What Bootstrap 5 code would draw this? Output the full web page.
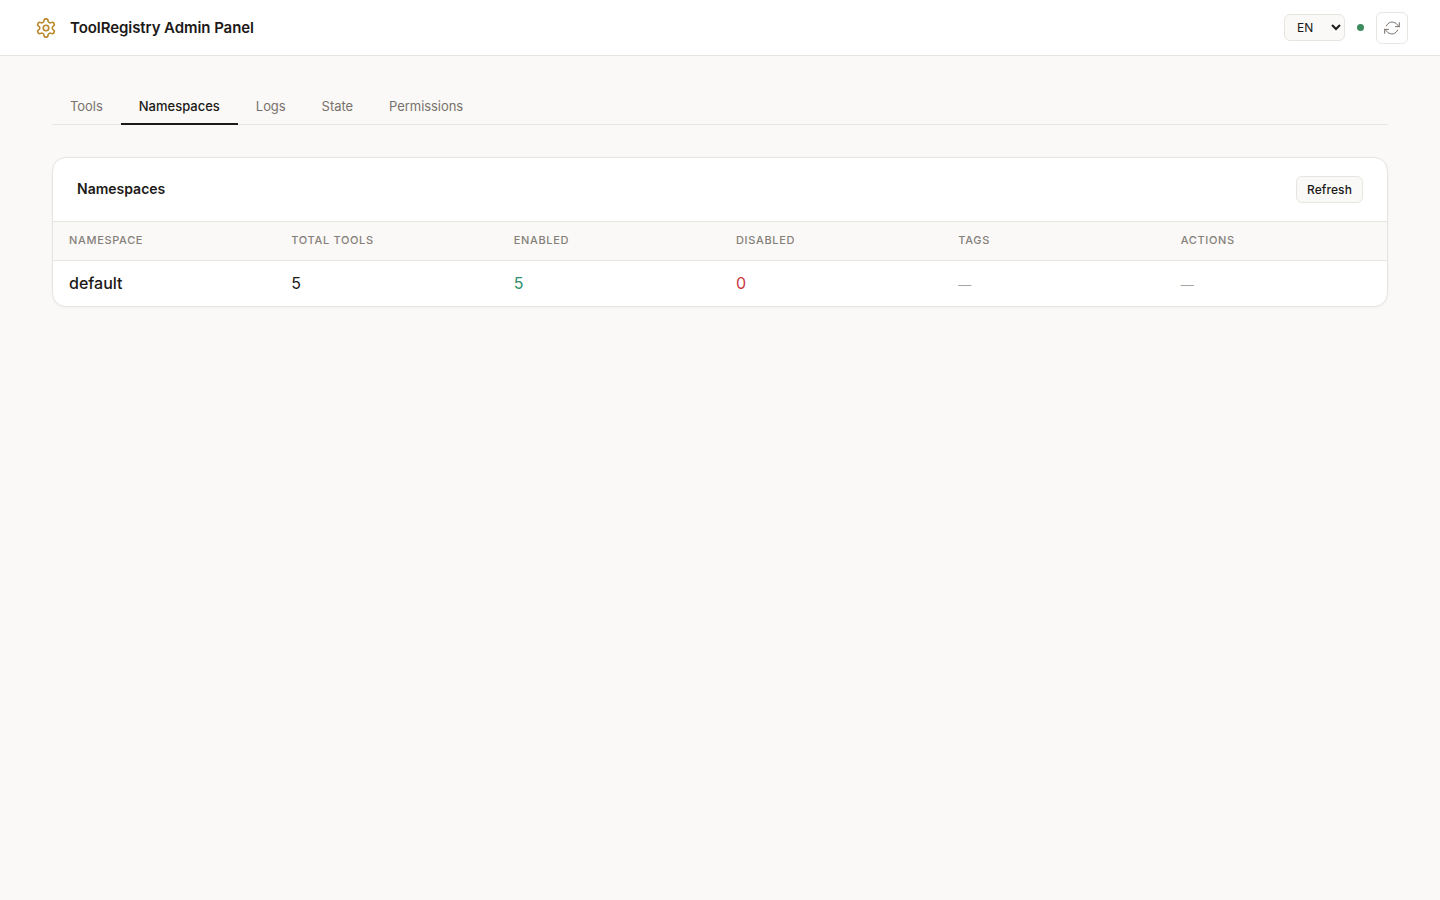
<!DOCTYPE html>
<html lang="en">
<head>
    <meta charset="UTF-8">
    <meta name="viewport" content="width=device-width, initial-scale=1.0">
    <title>ToolRegistry Admin Panel</title>
    <link href="https://cdn.jsdelivr.net/npm/bootstrap@5.3.0/dist/css/bootstrap.min.css" rel="stylesheet">
    <style>
        body {
            background: #faf9f7;
            color: #1c1917;
            font-family: Inter, "Liberation Sans", sans-serif;
        }
        .top-bar {
            height: 56px;
            padding: 0 32px 0 35px;
            background: #fff;
            border-bottom: 1px solid #e7e5e0;
        }
        .brand-icon { color: #b8892b; }
        .brand-name { font-size: 15px; font-weight: 600; letter-spacing: -0.07px; margin-left: 13px; padding-top: 1px; }
        .lang-select {
            width: 61px;
            height: 27px;
            padding: 0 4px 0 8px;
            font: 12px Inter, sans-serif;
            color: #1c1917;
            background: #faf9f7;
            border: 1px solid #e7e5e0;
            border-radius: 6px;
        }
        .status-dot { width: 7px; height: 7px; background: #3d8b5f; border-radius: 50%; margin: 0 12px; }
        .icon-btn {
            width: 32px;
            height: 32px;
            padding: 0;
            color: #78716c;
            background: #fff;
            border: 1px solid #e7e5e0;
            border-radius: 6px;
        }
        .page-body { padding: 32px 52px; }
        .tab-row { border-bottom: 1px solid #e7e5e0; margin-bottom: 32px; }
        .tab-link {
            display: block;
            padding: 10px 18px;
            height: 37px;
            font-size: 13px;
            line-height: 17px;
            font-weight: 400;
            letter-spacing: -0.05px;
            color: #78716c;
            text-decoration: none;
            margin-bottom: -1px;
        }
        .tab-link.active { font-weight: 500; letter-spacing: 0; color: #1c1917; border-bottom: 2px solid #1c1917; }
        .panel {
            background: #fff;
            border: 1px solid #e7e5e0;
            border-radius: 14px;
            box-shadow: 0 1px 3px rgba(0, 0, 0, 0.04);
            overflow: hidden;
        }
        .panel-head { height: 64px; padding: 0 24px; border-bottom: 1px solid #e7e5e0; }
        .panel-title { font-size: 14px; font-weight: 600; margin: 0; }
        .refresh-btn {
            height: 27px;
            padding: 1px 10px 0;
            font-size: 12px;
            font-weight: 500;
            letter-spacing: 0.1px;
            color: #1c1917;
            background: #faf9f7;
            border: 1px solid #e7e5e0;
            border-radius: 6px;
        }
        .ns-table { table-layout: fixed; margin: 0; --bs-table-bg: transparent; }
        .ns-table th {
            height: 38px;
            padding: 0 16px 1px;
            font-size: 11px;
            font-weight: 500;
            letter-spacing: 0.66px;
            text-transform: uppercase;
            color: #857f7a;
            background: #faf9f7;
            border-bottom: 1px solid #e7e5e0;
            vertical-align: middle;
        }
        .ns-table td {
            height: 46px;
            padding: 0 16px 1px;
            font-size: 16px;
            color: #1c1917;
            border-bottom: 0;
            vertical-align: middle;
        }
        .ns-table td.val-name { font-weight: 500; }
        .ns-table td.val-on { color: #2f8f68; }
        .ns-table td.val-off { color: #c9383f; }
        .ns-table td.val-none { color: #a8a29e; font-size: 13px; padding: 4px 16px 0; }
    </style>
</head>
<body>
    <!-- Header -->
    <header class="top-bar d-flex align-items-center justify-content-between">
        <div class="d-flex align-items-center">
            <svg class="brand-icon" width="22" height="22" viewBox="0 0 24 24" fill="none" stroke="currentColor" stroke-width="1.75" stroke-linecap="round" stroke-linejoin="round">
                <path d="M12.22 2h-.44a2 2 0 0 0-2 2v.18a2 2 0 0 1-1 1.73l-.43.25a2 2 0 0 1-2 0l-.15-.08a2 2 0 0 0-2.73.73l-.22.38a2 2 0 0 0 .73 2.73l.15.1a2 2 0 0 1 1 1.72v.51a2 2 0 0 1-1 1.74l-.15.09a2 2 0 0 0-.73 2.73l.22.38a2 2 0 0 0 2.73.73l.15-.08a2 2 0 0 1 2 0l.43.25a2 2 0 0 1 1 1.73V20a2 2 0 0 0 2 2h.44a2 2 0 0 0 2-2v-.18a2 2 0 0 1 1-1.73l.43-.25a2 2 0 0 1 2 0l.15.08a2 2 0 0 0 2.73-.73l.22-.39a2 2 0 0 0-.73-2.73l-.15-.08a2 2 0 0 1-1-1.74v-.5a2 2 0 0 1 1-1.74l.15-.09a2 2 0 0 0 .73-2.73l-.22-.38a2 2 0 0 0-2.73-.73l-.15.08a2 2 0 0 1-2 0l-.43-.25a2 2 0 0 1-1-1.73V4a2 2 0 0 0-2-2z"/>
                <circle cx="12" cy="12" r="3"/>
            </svg>
            <span class="brand-name">ToolRegistry Admin Panel</span>
        </div>
        <div class="d-flex align-items-center">
            <select class="lang-select">
                <option>EN</option>
            </select>
            <span class="status-dot"></span>
            <button type="button" class="icon-btn d-flex align-items-center justify-content-center">
                <svg width="16" height="16" viewBox="0 0 24 24" fill="none" stroke="currentColor" stroke-width="1.5" stroke-linecap="round" stroke-linejoin="round">
                    <polyline points="23 4 23 10 17 10"/>
                    <polyline points="1 20 1 14 7 14"/>
                    <path d="M3.51 9a9 9 0 0 1 14.85-3.36L23 10M1 14l4.64 4.36A9 9 0 0 0 20.49 15"/>
                </svg>
            </button>
        </div>
    </header>

    <main class="page-body">
        <!-- Tabs -->
        <nav class="tab-row d-flex">
            <a class="tab-link" href="#">Tools</a>
            <a class="tab-link active" href="#">Namespaces</a>
            <a class="tab-link" href="#">Logs</a>
            <a class="tab-link" href="#">State</a>
            <a class="tab-link" href="#">Permissions</a>
        </nav>

        <!-- Namespaces -->
        <section class="panel">
            <div class="panel-head d-flex align-items-center justify-content-between">
                <h2 class="panel-title">Namespaces</h2>
                <button type="button" class="refresh-btn">Refresh</button>
            </div>
            <table class="table ns-table">
                <thead>
                    <tr>
                        <th>Namespace</th>
                        <th>Total Tools</th>
                        <th>Enabled</th>
                        <th>Disabled</th>
                        <th>Tags</th>
                        <th>Actions</th>
                    </tr>
                </thead>
                <tbody>
                    <tr>
                        <td class="val-name">default</td>
                        <td>5</td>
                        <td class="val-on">5</td>
                        <td class="val-off">0</td>
                        <td class="val-none">—</td>
                        <td class="val-none">—</td>
                    </tr>
                </tbody>
            </table>
        </section>
    </main>

    <script src="https://cdn.jsdelivr.net/npm/bootstrap@5.3.0/dist/js/bootstrap.bundle.min.js"></script>
</body>
</html>
